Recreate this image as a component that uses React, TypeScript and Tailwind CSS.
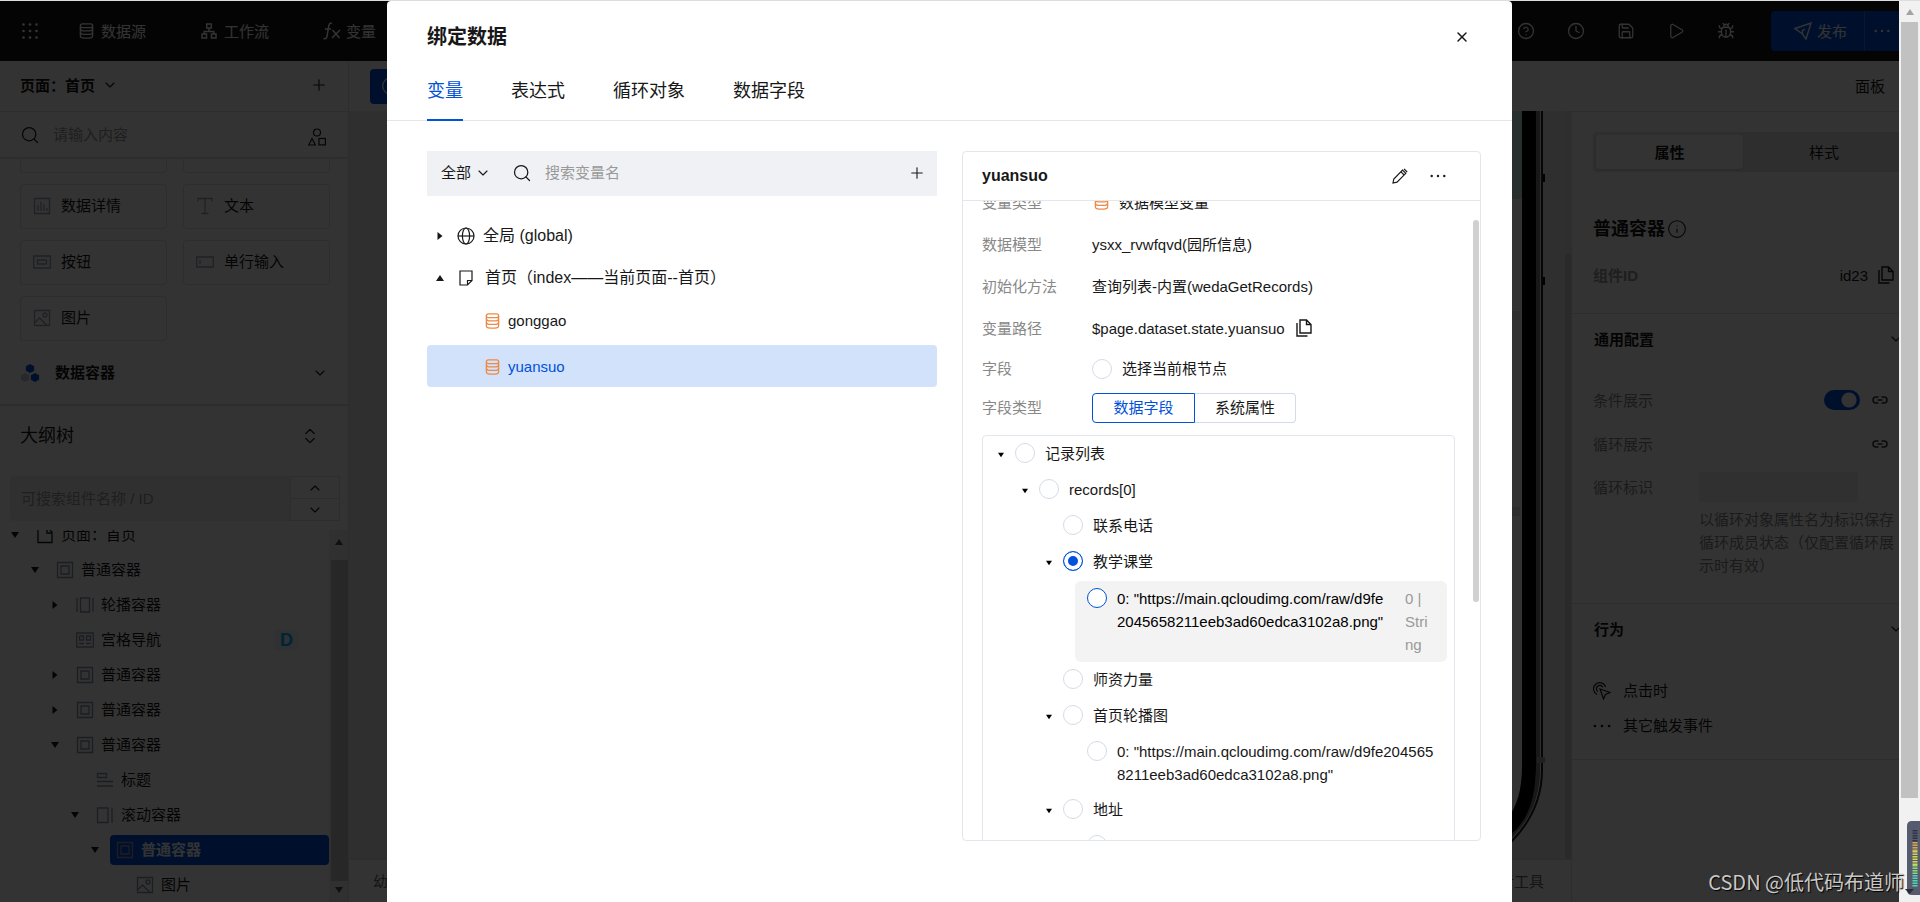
import type { ReactNode } from 'react'
import {
  Bug,
  ChevronDown,
  ChevronUp,
  ChevronsUpDown,
  CircleHelp,
  Clock,
  Info,
  Play,
  Plus,
  Save,
  Search,
  X,
} from 'lucide-react'

type IconProps = { className?: string }

/* ---------- Icons ---------- */

function DatabaseIcon({ className = '' }: IconProps) {
  return (
    <svg viewBox="0 0 15 17" fill="none" stroke="currentColor" strokeWidth="1.4" className={className}>
      <rect x="1" y="1" width="13" height="4" rx="2" />
      <path d="M1 3v10.500q0 2.500 4 2.500h5q4 0 4-2.500V3" />
      <path d="M1 5.800q0 2.600 4 2.600h5q4 0 4-2.600M1 9.500q0 2.600 4 2.600h5q4 0 4-2.600" />
    </svg>
  )
}

function FlowIcon({ className = '' }: IconProps) {
  return (
    <svg viewBox="0 0 16 16" fill="none" stroke="currentColor" strokeWidth="1.500" className={className}>
      <rect x="5.700" y="1" width="4.600" height="4" />
      <rect x="1" y="11" width="4.500" height="4" />
      <rect x="10.500" y="11" width="4.500" height="4" />
      <path d="M8 5v3.500M3.200 11V8.500h9.600V11" />
    </svg>
  )
}

function FxIcon({ className = '' }: IconProps) {
  return (
    <svg viewBox="0 0 18 18" fill="none" stroke="currentColor" strokeWidth="1.500" className={className}>
      <path d="M9 1.500C6.500.5 6 2.500 5.600 5L4 14c-.4 2.300-1.300 3-3.500 2.500M2 7h6M9.500 8l7 8M17 8l-8 8" />
    </svg>
  )
}

function DotsGridIcon({ className = '' }: IconProps) {
  return (
    <svg viewBox="0 0 16 16" fill="currentColor" className={className}>
      {[1.5, 8, 14.5].map((y) => [1.5, 8, 14.5].map((x) => <circle key={`${x}-${y}`} cx={x} cy={y} r="1.300" />))}
    </svg>
  )
}

function MoreIcon({ className = '' }: IconProps) {
  return (
    <svg viewBox="0 0 16 16" fill="currentColor" className={className}>
      <circle cx="1.700" cy="8" r="1.200" />
      <circle cx="8" cy="8" r="1.200" />
      <circle cx="14.300" cy="8" r="1.200" />
    </svg>
  )
}

function SendIcon({ className = '' }: IconProps) {
  return (
    <svg viewBox="0 0 18 18" fill="none" stroke="currentColor" strokeWidth="1.400" className={className}>
      <path d="M1 6.500L17 1l-5 16-3.500-5zM8.500 12V8.500L11 7" />
    </svg>
  )
}

function LinkIcon({ className = '' }: IconProps) {
  return (
    <svg viewBox="0 0 16 8" fill="none" stroke="currentColor" strokeWidth="1.500" className={className}>
      <path d="M6.500 1H4a3 3 0 0 0 0 6h2.500M9.500 1H12a3 3 0 0 1 0 6H9.500M5.500 4h5" />
    </svg>
  )
}

function ShapesIcon({ className = '' }: IconProps) {
  return (
    <svg viewBox="0 0 18 18" fill="none" stroke="currentColor" strokeWidth="1.200" className={className}>
      <circle cx="9" cy="4.500" r="3.500" />
      <path d="M4 10.500L7.300 17H.8z" />
      <rect x="11" y="10.500" width="6.400" height="6.400" />
    </svg>
  )
}

function CopyIcon({ className = '' }: IconProps) {
  return (
    <svg viewBox="0 0 16 18" fill="none" stroke="currentColor" strokeWidth="1.400" className={className}>
      <path d="M4 1h6.500L15 5.500V14H4zM10.500 1v4.500H15M1 4v13h10.500" />
    </svg>
  )
}

function GlobeIcon({ className = '' }: IconProps) {
  return (
    <svg viewBox="0 0 18 18" fill="none" stroke="currentColor" strokeWidth="1.200" className={className}>
      <circle cx="9" cy="9" r="8" />
      <ellipse cx="9" cy="9" rx="3.600" ry="8" />
      <path d="M1 9h16" />
    </svg>
  )
}

function NoteIcon({ className = '' }: IconProps) {
  return (
    <svg viewBox="0 0 14 16" fill="none" stroke="currentColor" strokeWidth="1.200" className={className}>
      <path d="M1 1h12v9.500L8.500 15H1zM13 10.500H8.500V15" />
    </svg>
  )
}

function PencilIcon({ className = '' }: IconProps) {
  return (
    <svg viewBox="0 0 16 16" fill="none" stroke="currentColor" strokeWidth="1.200" className={className}>
      <path d="M1 15l.8-4L10.500 2l3.300 3.300L5 14.200zM8.800 3.700l3.300 3.300M12 .8l3.200 3.200" />
    </svg>
  )
}

function ClickIcon({ className = '' }: IconProps) {
  return (
    <svg viewBox="0 0 18 18" fill="none" stroke="currentColor" strokeWidth="1.200" className={className}>
      <path d="M4 12.500A6.200 6.200 0 1 1 12.600 5M5 9.500A3.300 3.300 0 1 1 9.700 5.300" />
      <path d="M7 7l10 3.500-4.500 2L10.500 17z" />
    </svg>
  )
}

function HexIcon({ className = '' }: IconProps) {
  return (
    <svg viewBox="0 0 18 18" className={className}>
      <path d="M9 1l3.700 2v4L9 9 5.300 7V3z" fill="#0052d9" />
      <path d="M13.500 9l3.700 2v4l-3.700 2-3.700-2v-4z" fill="#0052d9" />
      <path d="M4.500 9l3.700 2v4l-3.700 2-3.700-2v-4z" fill="#c0cbe6" />
    </svg>
  )
}

function Caret({ dir, className = 'size-2' }: { dir: 'up' | 'down' | 'right' | 'none'; className?: string }) {
  return (
    <svg viewBox="0 0 8 8" fill="currentColor" className={`shrink-0 ${className}`}>
      {dir === 'down' && <path d="M0 1h8L4 7z" />}
      {dir === 'up' && <path d="M0 7h8L4 1z" />}
      {dir === 'right' && <path d="M1.500 0v8l5-4z" />}
    </svg>
  )
}

type NodeKind = 'chart' | 'text' | 'button' | 'field' | 'image' | 'page' | 'box' | 'swiper' | 'grid' | 'title' | 'scroll'

function NodeIcon({ kind, className = '' }: { kind: NodeKind; className?: string }) {
  return (
    <svg viewBox="0 0 18 18" fill="none" stroke="currentColor" strokeWidth="1.300" className={`size-[18px] shrink-0 ${className}`}>
      {kind === 'chart' && <path d="M1.500 1.500h15v15h-15zM5 14V8M8 14V4.500M11 14V7M14 14v-3" />}
      {kind === 'text' && <path d="M2 4.500v-3h14v3M9 1.500v15M5.500 16.500h7" />}
      {kind === 'button' && <path d="M.7 3h16.600v12H.7zM4.500 7h9v4h-9z" />}
      {kind === 'field' && <path d="M.7 4h16.600v10H.7zM4 7v4" />}
      {kind === 'image' && (
        <>
          <path d="M1.500 1.500h15v15h-15zM1.500 14l5-5 7.500 7.500" />
          <circle cx="12" cy="6" r="2" />
        </>
      )}
      {kind === 'page' && <path d="M2 2v14.500h14V6l-4-4H2M11 2v5h5" />}
      {kind === 'box' && <path d="M1.500 1.500h15v15h-15zM5 5h8v8H5z" />}
      {kind === 'swiper' && <path d="M4.500 2h9v14h-9zM1 2v14M17 2v14" />}
      {kind === 'grid' && <path d="M.7 2h16.600v14H.7zM3.500 5h4v4h-4zM10.500 5h4v4h-4zM3 12.500h5M10 12.500h5" />}
      {kind === 'title' && <path d="M1.500 2.500h9v4h-9zM1 10.500h16M1 15h16" />}
      {kind === 'scroll' && <path d="M1.500 2h10.500v14.500H1.500zM16 1.500v15.500" />}
    </svg>
  )
}

/* ---------- Top bar ---------- */

function TopBar() {
  return (
    <header className="flex h-[60px] shrink-0 items-center bg-[#181818] text-[15px] text-white">
      <DotsGridIcon className="ml-[22px] size-4" />
      <nav className="flex items-center">
        <a href="#datasource" className="ml-[41px] flex items-center gap-[7px]">
          <DatabaseIcon className="h-4 w-[15px]" />
          数据源
        </a>
        <a href="#workflow" className="ml-[55px] flex items-center gap-[7px]">
          <FlowIcon className="size-4" />
          工作流
        </a>
        <a href="#vars" className="ml-[54px] flex items-center gap-[5px]">
          <FxIcon className="size-[18px]" />
          变量
        </a>
      </nav>
      <div className="ml-auto flex items-center gap-8">
        <CircleHelp className="size-[18px]" strokeWidth={1.7} />
        <Clock className="size-[18px]" strokeWidth={1.7} />
        <Save className="size-[18px]" strokeWidth={1.7} />
        <Play className="size-[18px]" strokeWidth={1.7} />
        <Bug className="size-[18px]" strokeWidth={1.7} />
      </div>
      <div className="ml-9 flex h-10 overflow-hidden rounded-l bg-[#0052d9]">
        <button className="flex w-[94px] items-center gap-[5px] border-r border-[#3375e0] pl-[23px]">
          <SendIcon className="size-[18px]" />
          发布
        </button>
        <button className="flex w-[34px] items-center justify-center" aria-label="更多">
          <MoreIcon className="size-4" />
        </button>
      </div>
    </header>
  )
}

/* ---------- Left sidebar ---------- */

const components: { label: string; kind: NodeKind }[] = [
  { label: '数据详情', kind: 'chart' },
  { label: '文本', kind: 'text' },
  { label: '按钮', kind: 'button' },
  { label: '单行输入', kind: 'field' },
  { label: '图片', kind: 'image' },
]

type OutlineNode = {
  label: string
  kind: NodeKind
  pad: string
  caret: 'down' | 'right' | 'none'
  badge?: boolean
  active?: boolean
}

const outline: OutlineNode[] = [
  { label: '页面：首页', kind: 'page', pad: 'pl-[11px]', caret: 'down' },
  { label: '普通容器', kind: 'box', pad: 'pl-[31px]', caret: 'down' },
  { label: '轮播容器', kind: 'swiper', pad: 'pl-[51px]', caret: 'right' },
  { label: '宫格导航', kind: 'grid', pad: 'pl-[51px]', caret: 'none', badge: true },
  { label: '普通容器', kind: 'box', pad: 'pl-[51px]', caret: 'right' },
  { label: '普通容器', kind: 'box', pad: 'pl-[51px]', caret: 'right' },
  { label: '普通容器', kind: 'box', pad: 'pl-[51px]', caret: 'down' },
  { label: '标题', kind: 'title', pad: 'pl-[71px]', caret: 'none' },
  { label: '滚动容器', kind: 'scroll', pad: 'pl-[71px]', caret: 'down' },
  { label: '普通容器', kind: 'box', pad: 'pl-[91px]', caret: 'down', active: true },
  { label: '图片', kind: 'image', pad: 'pl-[111px]', caret: 'none' },
]

function Sidebar() {
  return (
    <aside className="flex w-[349px] shrink-0 flex-col border-r border-[#e0e0e0] bg-white">
      <div className="flex h-[51px] shrink-0 items-center justify-between border-b border-[#e0e0e0] pr-5 pb-[2px] pl-5">
        <button className="flex items-center gap-[7px] font-bold">
          页面：首页
          <ChevronDown className="size-4" strokeWidth={1.7} />
        </button>
        <button aria-label="新增页面">
          <Plus className="size-[18px]" strokeWidth={1.5} />
        </button>
      </div>
      <div className="flex h-[47px] shrink-0 items-center border-b-2 border-[#e0e0e0] pr-[22px] pl-5">
        <Search className="size-5" strokeWidth={1.5} />
        <input aria-label="搜索组件" placeholder="请输入内容" className="ml-[13px] min-w-0 flex-1 placeholder:text-[#999]" />
        <ShapesIcon className="mt-1 size-[18px]" />
      </div>

      {/* Component list, scrolled to the end */}
      <div className="flex h-[245px] shrink-0 flex-col justify-end overflow-hidden">
        <div className="grid grid-cols-2 gap-x-4 gap-y-[11px] pr-[18px] pl-5">
          <div className="h-[45px] rounded border border-[#e0e0e0]" />
          <div className="h-[45px] rounded border border-[#e0e0e0]" />
          {components.map((item) => (
            <div key={item.label} className="flex h-[45px] items-center gap-[10px] rounded border border-[#e0e0e0] pb-[2px] pl-3">
              <NodeIcon kind={item.kind} className="text-[#9aa2b5]" />
              {item.label}
            </div>
          ))}
        </div>
        <button className="flex h-[63px] shrink-0 items-center pr-5 pl-5 font-bold">
          <HexIcon className="mr-[15px] size-5" />
          数据容器
          <ChevronDown className="ml-auto size-4" strokeWidth={1.7} />
        </button>
      </div>

      <div className="flex h-[62px] shrink-0 items-center justify-between border-t-2 border-[#e0e0e0] pr-7 pl-5 text-lg">
        大纲树
        <ChevronsUpDown className="size-5" strokeWidth={1.5} />
      </div>
      <div className="mt-[10px] mr-2 ml-[10px] flex h-[45px] shrink-0">
        <input
          aria-label="搜索大纲"
          placeholder="可搜索组件名称 / ID"
          className="min-w-0 flex-1 rounded-l bg-[#f0f0f0] pl-[11px] placeholder:text-[#999]"
        />
        <div className="flex w-[50px] flex-col divide-y divide-[#e0e0e0] border border-[#e0e0e0]">
          <button className="flex flex-1 items-center justify-center" aria-label="上一个">
            <ChevronUp className="size-4" strokeWidth={1.7} />
          </button>
          <button className="flex flex-1 items-center justify-center" aria-label="下一个">
            <ChevronDown className="size-4" strokeWidth={1.7} />
          </button>
        </div>
      </div>

      {/* Outline tree */}
      <div className="mt-[9px] flex min-h-0 flex-1 overflow-hidden">
        <ul className="-mt-[13px] min-w-0 flex-1">
          {outline.map((node, i) => (
            <li key={i} className={`flex h-[35px] items-center ${node.pad}`}>
              <Caret dir={node.caret} />
              <div
                className={
                  node.active
                    ? 'ml-[11px] flex h-[30px] flex-1 items-center rounded bg-[#0052d9] font-bold text-white'
                    : 'ml-[11px] flex h-[30px] flex-1 items-center'
                }
              >
                <NodeIcon kind={node.kind} className={i === 0 ? 'mr-[7px] ml-[6px]' : 'mr-[7px] ml-[6px] text-[#8a93a8]'} />
                {node.label}
                {node.badge && (
                  <span className="mr-[30px] ml-auto rounded bg-[#e8f4ff] px-[6px] text-lg leading-5 font-bold text-[#00b4ff]">D</span>
                )}
              </div>
            </li>
          ))}
        </ul>
        <div className="flex w-[19px] flex-col items-center bg-[#f1f1f1] py-2 text-[#505050]">
          <Caret dir="up" />
          <div className="mt-[14px] mb-[5px] ml-[2px] w-[17px] flex-1 bg-[#c1c1c1]" />
          <Caret dir="down" />
        </div>
      </div>
    </aside>
  )
}

/* ---------- Canvas ---------- */

function PhoneFrame() {
  return (
    <svg viewBox="0 0 60 748" fill="none" className="h-[748px] w-[60px] shrink-0">
      <path d="M0 0h37v664q0 34-37 60z" fill="#fff" />
      <path d="M0 0h37v88H0z" fill="#c3ebeb" />
      <path d="M10 200h24v9H10zM10 396h24v9H10z" fill="#e6e6e6" />
      <path d="M56 0v659q0 40-30 71l-10 8" stroke="#1c1f28" strokeWidth="2" />
      <path d="M52 0v659q0 38-27 66l-10 8" stroke="#777" strokeWidth="4" />
      <path d="M43 0v655q0 38-17 58l-14 12" stroke="#000" strokeWidth="14" />
      <path d="M51 646h8v6h-8z" fill="#999" />
      <path d="M58 63v8M58 166v8" stroke="#000" strokeWidth="2" />
    </svg>
  )
}

function Canvas() {
  return (
    <section className="flex min-w-0 flex-1 flex-col">
      <div className="flex h-[50px] shrink-0 items-center justify-between bg-white pr-[14px] pl-[21px]">
        <button className="flex h-[35px] w-11 items-center rounded bg-[#0052d9] pl-[11px] text-white" aria-label="提示">
          <Info className="size-5" strokeWidth={1.5} />
        </button>
        <button>面板</button>
      </div>
      <div className="flex min-h-0 flex-1">
        <div className="flex min-w-0 flex-1 flex-col border-r border-[#e0e0e0] bg-[#ebebeb]">
          <div className="flex min-h-0 flex-1 justify-end overflow-hidden">
            <PhoneFrame />
            <div className="ml-[19px] flex w-[6px] flex-col bg-[#e6e6e6] pt-[142px]">
              <div className="flex-1 rounded bg-[#d2d2d2]" />
            </div>
          </div>
          <div className="flex h-[43px] shrink-0 items-center justify-between border-t border-[#e0e0e0] bg-white pr-[27px] pl-6 text-[#666]">
            <span>幼儿园小程序</span>
            <span>开发者工具</span>
          </div>
        </div>
        <PropertyPanel />
      </div>
    </section>
  )
}

/* ---------- Property panel ---------- */

function SectionTitle({ children }: { children: ReactNode }) {
  return (
    <button className="flex h-[50px] w-full items-center justify-between pl-[22px] font-bold">
      {children}
      <ChevronDown className="size-4" strokeWidth={1.7} />
    </button>
  )
}

function PropertyPanel() {
  return (
    <aside className="w-[327px] shrink-0 overflow-hidden border-t border-[#e0e0e0] bg-white">
      <div className="w-[332px]">
        <div className="mt-5 ml-[21px] flex h-10 rounded-l bg-[#e3e6eb] p-[3px]" role="tablist">
          <button role="tab" aria-selected="true" className="w-[147px] rounded bg-white font-bold shadow-sm">
            属性
          </button>
          <button role="tab" aria-selected="false" className="flex-1 pl-1">
            样式
          </button>
        </div>
        <h2 className="mt-[42px] ml-[21px] flex h-[30px] items-center gap-[2px] text-lg font-bold">
          普通容器
          <Info className="size-5" strokeWidth={1.3} />
        </h2>
        <div className="mt-[14px] flex h-[34px] items-center pr-[10px] pl-[21px]">
          <span className="font-bold text-[#999]">组件ID</span>
          <span className="mr-[10px] ml-auto">id23</span>
          <CopyIcon className="h-[18px] w-4" />
        </div>
      </div>
      <div className="mt-[21px] w-[332px] border-t border-[#e0e0e0]">
        <SectionTitle>通用配置</SectionTitle>
        <div className="mt-[14px] flex h-11 items-center pr-4 pl-[21px] text-[#888]">
          <label htmlFor="cond">条件展示</label>
          <input
            id="cond"
            type="checkbox"
            role="switch"
            defaultChecked
            className="mr-3 ml-auto h-5 w-9 appearance-none rounded-full bg-[#0052d9] bg-[radial-gradient(circle_at_25px_10px,#fff_7px,transparent_8px)]"
          />
          <LinkIcon className="h-2 w-4 text-[#333]" />
        </div>
        <div className="flex h-11 items-center justify-between pr-4 pl-[21px] text-[#888]">
          循环展示
          <LinkIcon className="h-2 w-4 text-[#333]" />
        </div>
        <div className="flex h-[42px] items-center pr-[46px] pl-[21px] text-[#888]">
          <label htmlFor="loop">循环标识</label>
          <input id="loop" className="ml-auto h-[30px] w-[159px] bg-[#f0f0f0]" />
        </div>
        <p className="mr-1 ml-[127px] w-[200px] pb-[26px] leading-[23px] text-[#888]">
          以循环对象属性名为标识保存循环成员状态（仅配置循环展示时有效）
        </p>
      </div>
      <div className="w-[332px] border-y border-[#e0e0e0] pb-4">
        <SectionTitle>行为</SectionTitle>
        <ul className="mt-[19px]">
          <li className="flex h-[35px] items-center gap-3 pl-[21px]">
            <ClickIcon className="size-[18px]" />
            点击时
          </li>
          <li className="flex h-[35px] items-center gap-3 pl-[21px]">
            <MoreIcon className="size-[18px]" />
            其它触发事件
          </li>
        </ul>
      </div>
    </aside>
  )
}

/* ---------- Bind data dialog ---------- */

const radioClass =
  'mt-px size-5 shrink-0 appearance-none rounded-full border bg-white checked:border-[#0052d9] checked:bg-[#0052d9] checked:shadow-[inset_0_0_0_4px_#fff]'

const tabs = ['变量', '表达式', '循环对象', '数据字段']

type FieldNode = { id: string; label: string; pad: string; open?: boolean; hover?: boolean; checked?: boolean }

const fields: FieldNode[] = [
  { id: 'list', label: '记录列表', pad: 'pl-3', open: true },
  { id: 'record', label: 'records[0]', pad: 'pl-9', open: true },
  { id: 'phone', label: '联系电话', pad: 'pl-[60px]' },
  { id: 'class', label: '教学课堂', pad: 'pl-[60px]', open: true, checked: true },
  { id: 'class0', label: '0: "https://main.qcloudimg.com/raw/d9fe2045658211eeb3ad60edca3102a8.png"', pad: '', hover: true },
  { id: 'teacher', label: '师资力量', pad: 'pl-[60px]' },
  { id: 'banner', label: '首页轮播图', pad: 'pl-[60px]', open: true },
  { id: 'banner0', label: '0: "https://main.qcloudimg.com/raw/d9fe2045658211eeb3ad60edca3102a8.png"', pad: 'pl-[84px]' },
  { id: 'address', label: '地址', pad: 'pl-[60px]', open: true },
  { id: 'address0', label: '', pad: 'pl-[84px]' },
]

function FieldRow({ node }: { node: FieldNode }) {
  if (node.hover) {
    return (
      <li className="mt-px mr-[7px] ml-[92px] flex items-start rounded-md bg-[#f3f3f3] py-[6px] pr-[18px] pl-3">
        <input id={node.id} type="radio" name="field" className={`${radioClass} border-[#0052d9]`} />
        <label htmlFor={node.id} className="ml-[10px] w-[267px] leading-[23px] break-all text-black">
          {node.label}
        </label>
        <span className="ml-auto w-6 leading-[23px] break-all text-[#999]">0 | String</span>
      </li>
    )
  }
  return (
    <li className={`flex min-h-9 items-start py-[6px] pr-[14px] ${node.pad}`}>
      <span className="mt-[10px] flex w-5 shrink-0 pl-[3px] text-black">
        {node.open && <Caret dir="down" className="size-[6px]" />}
      </span>
      <input id={node.id} type="radio" name="field" defaultChecked={node.checked} className={`${radioClass} border-[#d5dbe6]`} />
      <label htmlFor={node.id} className="ml-[10px] leading-[23px] break-all">
        {node.label}
      </label>
    </li>
  )
}

function InfoRow({ label, children }: { label: string; children: ReactNode }) {
  return (
    <div className="flex h-[42px] items-center">
      <span className="w-[110px] shrink-0 text-[#888]">{label}</span>
      {children}
    </div>
  )
}

function VariableList() {
  return (
    <div className="w-[510px] shrink-0">
      <div className="flex h-[45px] items-center bg-[#f0f1f5] pr-[11px] pb-[2px] pl-[14px]">
        <select aria-label="范围" className="appearance-none">
          <option>全部</option>
        </select>
        <ChevronDown className="ml-[3px] size-4" strokeWidth={1.7} />
        <Search className="ml-[21px] size-5" strokeWidth={1.5} />
        <input aria-label="搜索变量名" placeholder="搜索变量名" className="ml-[13px] min-w-0 flex-1 placeholder:text-[#999]" />
        <button aria-label="新增变量">
          <Plus className="size-[18px]" strokeWidth={1.5} />
        </button>
      </div>
      <ul className="mt-[19px]">
        <li className="flex h-[42px] items-center pl-[9px] text-base">
          <Caret dir="right" />
          <GlobeIcon className="mr-2 ml-[13px] size-[18px]" />
          全局 (global)
        </li>
        <li className="flex h-[42px] items-center pl-[9px] text-base">
          <Caret dir="up" />
          <NoteIcon className="mr-3 ml-[15px] h-4 w-[14px]" />
          首页（index——当前页面--首页）
        </li>
        <li className="flex h-[42px] items-center pl-[58px]">
          <DatabaseIcon className="mt-[2px] mr-2 h-4 w-[15px] text-[#ed8a45]" />
          gonggao
        </li>
        <li className="mt-1 flex h-[42px] items-center rounded bg-[#d3e2fb] pl-[58px] text-[#0052d9]">
          <DatabaseIcon className="mt-[2px] mr-2 h-4 w-[15px] text-[#ed8a45]" />
          yuansuo
        </li>
      </ul>
    </div>
  )
}

function VariableDetail() {
  return (
    <section className="flex min-w-0 flex-1 flex-col rounded border border-[#e3e6eb]">
      <header className="flex h-[49px] shrink-0 items-center border-b border-[#e3e6eb] pr-[34px] pl-[19px]">
        <h3 className="mr-auto text-base font-bold">yuansuo</h3>
        <button aria-label="编辑">
          <PencilIcon className="size-4" />
        </button>
        <button aria-label="更多" className="ml-[22px]">
          <MoreIcon className="size-4" />
        </button>
      </header>
      <div className="flex min-h-0 flex-1 overflow-hidden">
        <div className="-mt-5 min-w-0 flex-1 pr-[18px] pl-[19px]">
          <InfoRow label="变量类型">
            <DatabaseIcon className="mr-[10px] ml-[2px] h-4 w-[15px] text-[#ed8a45]" />
            数据模型变量
          </InfoRow>
          <InfoRow label="数据模型">ysxx_rvwfqvd(园所信息)</InfoRow>
          <InfoRow label="初始化方法">查询列表-内置(wedaGetRecords)</InfoRow>
          <InfoRow label="变量路径">
            $page.dataset.state.yuansuo
            <button aria-label="复制" className="ml-[11px]">
              <CopyIcon className="h-[18px] w-4" />
            </button>
          </InfoRow>
          <div className="flex h-[39px] items-center">
            <span className="w-[110px] text-[#888]">字段</span>
            <input id="root-node" type="radio" name="field" className={`${radioClass} border-[#d5dbe6]`} />
            <label htmlFor="root-node" className="ml-[10px]">
              选择当前根节点
            </label>
          </div>
          <div className="flex h-[39px] items-center">
            <span className="w-[110px] text-[#888]">字段类型</span>
            <button className="h-[30px] w-[103px] rounded-l border border-[#0052d9] text-[#0052d9]">数据字段</button>
            <button className="h-[30px] w-[101px] rounded-r border border-l-0 border-[#d5dbe6]">系统属性</button>
          </div>
          <ul className="mt-2 rounded-t border border-[#e3e6eb]">
            {fields.map((node) => (
              <FieldRow key={node.id} node={node} />
            ))}
          </ul>
        </div>
        <div className="w-[7px] pt-[19px]">
          <div className="h-[382px] w-[6px] rounded-full bg-[#d0d0d0]" />
        </div>
      </div>
    </section>
  )
}

function BindDataDialog() {
  return (
    <div role="dialog" aria-label="绑定数据" className="flex h-full w-[1125px] max-w-full flex-col rounded-t-sm bg-white">
      <header className="flex h-[71px] shrink-0 items-center justify-between pr-[42px] pl-10">
        <h1 className="text-xl font-bold">绑定数据</h1>
        <button aria-label="关闭">
          <X className="size-4" strokeWidth={2.2} />
        </button>
      </header>
      <div role="tablist" className="flex h-[49px] shrink-0 gap-12 border-b border-[#e3e6eb] pl-10 text-lg">
        {tabs.map((tab, i) => (
          <button
            key={tab}
            role="tab"
            aria-selected={i === 0}
            className={i === 0 ? '-mb-px border-b-2 border-[#0052d9] pb-[10px] text-[#0052d9]' : 'pb-[11px]'}
          >
            {tab}
          </button>
        ))}
      </div>
      <div className="flex min-h-0 flex-1 gap-[25px] pt-[30px] pr-[31px] pb-[61px] pl-10">
        <VariableList />
        <VariableDetail />
      </div>
    </div>
  )
}

/* ---------- Page ---------- */

function PageScrollbar() {
  return (
    <div className="relative flex w-[21px] shrink-0 flex-col bg-[#f1f1f1]">
      <div className="flex h-[21px] items-center justify-center text-[#a3a3a3]">
        <Caret dir="up" />
      </div>
      <div className="ml-[2px] h-[776px] w-[17px] bg-[#c1c1c1]" />
      {/* Sound level widget docked to the edge */}
      <svg viewBox="0 0 15 74" className="absolute right-0 bottom-[7px] h-[74px] w-[15px]">
        <path d="M7 0h8v74H7q-5 0-5-5V5q0-5 5-5z" fill="#565c6e" />
        <path d="M10 9v12" stroke="#2f3442" strokeWidth="5" strokeDasharray="1.500 1" />
        <path d="M10 21v9" stroke="#d8a650" strokeWidth="5" strokeDasharray="1.500 1" />
        <path d="M10 30v14" stroke="#d3d850" strokeWidth="5" strokeDasharray="1.500 1" />
        <path d="M10 44v10" stroke="#8fdc7c" strokeWidth="5" strokeDasharray="1.500 1" />
        <path d="M10 54v12" stroke="#4fd6b4" strokeWidth="5" strokeDasharray="1.500 1" />
        <path d="M0 68h9l-4.500 5z" fill="#2b2d33" />
      </svg>
    </div>
  )
}

export default function App() {
  return (
    <div className="relative flex h-screen overflow-hidden border-t border-[#dcdcdc] bg-white font-['Liberation_Sans','Noto_Sans_CJK_SC',sans-serif] text-[15px] leading-[23px] text-[#181818]">
      <div className="relative flex min-w-0 flex-1 flex-col overflow-hidden">
        <TopBar />
        <div className="flex min-h-0 flex-1">
          <Sidebar />
          <Canvas />
        </div>
        <div className="absolute inset-0 flex justify-center bg-black/80">
          <BindDataDialog />
        </div>
      </div>
      <PageScrollbar />
      <p className="absolute right-4 bottom-1 font-['Noto_Sans_CJK_SC',sans-serif] text-xl leading-8 text-[#c8c8c8] [text-shadow:1px_1px_1px_#000]">
        CSDN @低代码布道师
      </p>
    </div>
  )
}
